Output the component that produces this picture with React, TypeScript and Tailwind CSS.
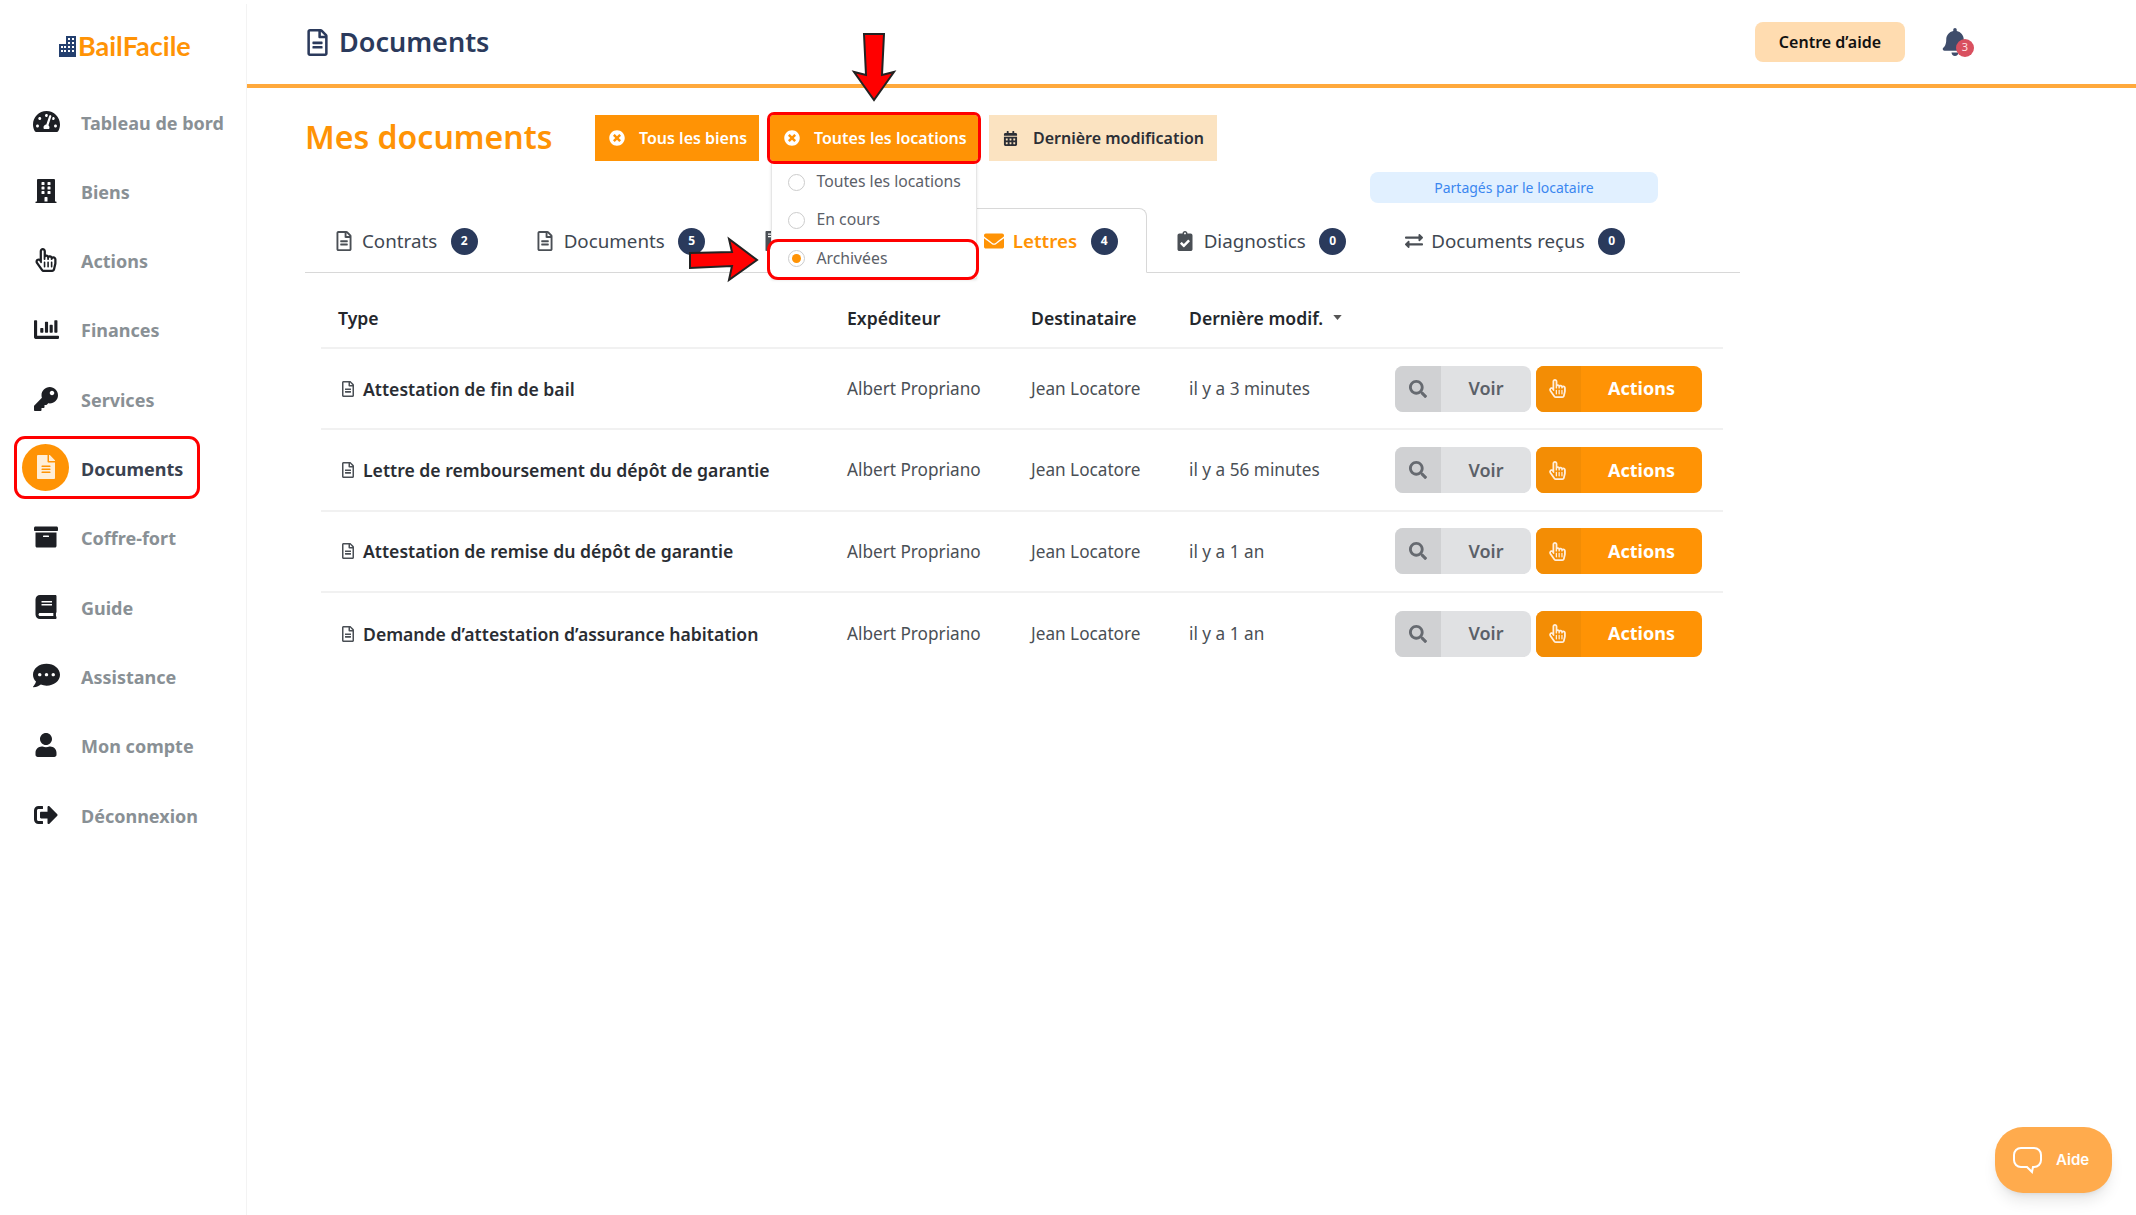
import type { ReactNode } from "react";
import type { IconType } from "react-icons";
import {
  FaArchive,
  FaBell,
  FaBook,
  FaCalendarAlt,
  FaChartBar,
  FaClipboardCheck,
  FaCommentDots,
  FaEnvelope,
  FaExchangeAlt,
  FaFileAlt,
  FaFileInvoiceDollar,
  FaKey,
  FaRegFileAlt,
  FaRegHandPointer,
  FaSearch,
  FaSignOutAlt,
  FaTachometerAlt,
  FaTimesCircle,
  FaBuilding,
  FaUser,
} from "react-icons/fa";

const nav: { label: string; icon: IconType; iconClass: string }[] = [
  { label: "Tableau de bord", icon: FaTachometerAlt, iconClass: "text-[27px]" },
  { label: "Biens", icon: FaBuilding, iconClass: "text-[24px]" },
  { label: "Actions", icon: FaRegHandPointer, iconClass: "text-[24px]" },
  { label: "Finances", icon: FaChartBar, iconClass: "text-[25px]" },
  { label: "Services", icon: FaKey, iconClass: "text-[24px]" },
  { label: "Documents", icon: FaFileAlt, iconClass: "text-[24px]" },
  { label: "Coffre-fort", icon: FaArchive, iconClass: "text-[24px]" },
  { label: "Guide", icon: FaBook, iconClass: "text-[24px]" },
  { label: "Assistance", icon: FaCommentDots, iconClass: "text-[27px]" },
  { label: "Mon compte", icon: FaUser, iconClass: "text-[24px]" },
  { label: "Déconnexion", icon: FaSignOutAlt, iconClass: "text-[24px]" },
];

const rows = [
  ["Attestation de fin de bail", "il y a 3 minutes"],
  ["Lettre de remboursement du dépôt de garantie", "il y a 56 minutes"],
  ["Attestation de remise du dépôt de garantie", "il y a 1 an"],
  ["Demande d’attestation d’assurance habitation", "il y a 1 an"],
];

function Logo() {
  return (
    <div className="flex h-[88.4px] items-center pl-[59px] pt-[5px]">
      <svg viewBox="0 0 17 21" className="mr-[2px] h-[21px] w-[17px]" fill="#24406f">
        <path d="M7 0h10v21H0V8h7z" />
        <g fill="#fff">
          <rect x="9" y="2" width="2" height="2" />
          <rect x="13" y="2" width="2" height="2" />
          <rect x="9" y="6" width="2" height="2" />
          <rect x="13" y="6" width="2" height="2" />
          <rect x="2" y="10" width="2" height="2" />
          <rect x="5" y="10" width="2" height="2" />
          <rect x="9" y="10" width="2" height="2" />
          <rect x="13" y="10" width="2" height="2" />
          <rect x="2" y="14" width="2" height="2" />
          <rect x="5" y="14" width="2" height="2" />
          <rect x="9" y="14" width="2" height="2" />
          <rect x="13" y="14" width="2" height="2" />
        </g>
      </svg>
      <span className="font-['Lato',sans-serif] text-[27px] font-bold text-[#ff9305]">BailFacile</span>
    </div>
  );
}

function Sidebar() {
  return (
    <aside className="mt-1 w-[247px] shrink-0 border-r border-[#f3f3f3]">
      <div className="-mt-1">
        <Logo />
        {nav.map(({ label, icon: Icon, iconClass }) => {
          const active = label === "Documents";
          return (
            <div key={label} className="flex h-[69.3px] items-center">
              {active ? (
                <div className="mb-[5px] ml-[17px] flex h-[57px] w-[180px] items-center rounded-lg outline-[3px] outline-[#f00]">
                  <span className="ml-[5px] flex h-[47px] w-[47px] shrink-0 items-center justify-center rounded-full bg-[#ff9305]">
                    <Icon className="text-[24px] text-[#ffeed8]" />
                  </span>
                  <span className="ml-[12px] mt-[4px] text-[18px] font-bold text-[#3a4250]">{label}</span>
                </div>
              ) : (
                <>
                  <span className="mb-[3px] flex w-[92px] items-center justify-center">
                    <Icon className={`${iconClass} text-[#1d1f24]`} />
                  </span>
                  <span className="-ml-[11px] text-[18px] font-bold text-[#899095]">{label}</span>
                </>
              )}
            </div>
          );
        })}
      </div>
    </aside>
  );
}

function Header() {
  return (
    <header className="flex h-[88px] items-center border-b-4 border-[#ffa93c] pl-[57px]">
      <FaRegFileAlt className="text-[27px] text-[#2b3a5c]" />
      <h1 className="ml-[8px] text-[27px] font-semibold text-[#2b3a5c]">Documents</h1>
      <button className="ml-auto flex h-[40px] w-[150px] items-center justify-center rounded-lg bg-[#ffdcb0] text-[16px] font-semibold text-[#111]">
        Centre d’aide
      </button>
      <div className="relative ml-[36px] mr-[171px] mt-[2px] h-[31px] w-[24px]">
        <FaBell className="text-[28px] text-[#3f4d6b]" />
        <span className="absolute left-[15px] top-[11px] flex h-[18px] w-[18px] items-center justify-center rounded-full bg-[#d9505f] text-[11px] text-[#ffe3e3]">
          3
        </span>
      </div>
    </header>
  );
}

function FilterButton({
  icon,
  label,
  pale,
  children,
  className,
}: {
  icon: ReactNode;
  label: string;
  pale?: boolean;
  children?: ReactNode;
  className?: string;
}) {
  return (
    <div className={`relative flex h-[46px] items-center text-[16px] font-semibold ${pale ? "bg-[#fbe3c1] text-[#2c2f36]" : "bg-[#ff9305] text-white"} ${className ?? ""}`}>
      {icon}
      <span>{label}</span>
      {children}
    </div>
  );
}

function Radio({ label, checked, boxed }: { label: string; checked?: boolean; boxed?: boolean }) {
  return (
    <div
      className={`flex items-center text-[15.75px] text-[#5b6068] ${
        boxed
          ? "-ml-[2px] mt-[3px] h-[35px] rounded-lg bg-white pb-[2px] pl-[17.5px] outline-[3px] outline-[#f00]"
          : "h-[38px] pl-[15.5px]"
      }`}
    >
      <span className="flex h-[17px] w-[17px] items-center justify-center rounded-full border border-[#ccc] bg-white">
        {checked && <span className="h-[9px] w-[9px] rounded-full bg-[#ff9305]" />}
      </span>
      <span className="ml-[12px]">{label}</span>
    </div>
  );
}

function Filters() {
  return (
    <div className="mt-[27px] flex items-center">
      <h2 className="mb-[2px] w-[290px] text-[32px] font-semibold leading-[44px] text-[#ff9305]">Mes documents</h2>
      <FilterButton
        label="Tous les biens"
        className="w-[164px]"
        icon={<FaTimesCircle className="ml-[14px] mr-[14px] text-[16px]" />}
      />
      <FilterButton
        label="Toutes les locations"
        className="z-20 ml-[11px] w-[208px] rounded-sm outline-[3px] outline-[#f00]"
        icon={<FaTimesCircle className="ml-[14px] mr-[14px] text-[16px]" />}
      >
        <div className="absolute left-[1px] top-[48px] -z-10 h-[116px] w-[206px] border border-t-0 border-[#e6e6e6] bg-white font-normal shadow-sm">
          <Radio label="Toutes les locations" />
          <Radio label="En cours" />
          <Radio label="Archivées" checked boxed />
        </div>
      </FilterButton>
      <FilterButton
        pale
        label="Dernière modification"
        className="ml-[11px] w-[228px]"
        icon={<FaCalendarAlt className="ml-[14px] mr-[15px] text-[15px]" />}
      />
    </div>
  );
}

function Tab({
  icon: Icon,
  label,
  count,
  active,
  iconClass,
  className,
}: {
  icon: IconType;
  label: string;
  count: number;
  active?: boolean;
  iconClass?: string;
  className?: string;
}) {
  return (
    <div
      className={`-mb-px flex h-[65px] shrink-0 items-center pt-[1px] text-[18.75px] ${
        active ? "rounded-t-lg border border-b-white border-[#d8d8d8] bg-white pl-[28px] pr-[28px] font-semibold text-[#ff9305]" : "pl-[28.5px] pr-[29px] text-[#3f4852]"
      } ${className ?? ""}`}
    >
      <Icon className={iconClass ?? "text-[20px] text-[#4a4f55]"} />
      <span className="ml-[8.5px]">{label}</span>
      <span className="ml-[13.5px] flex h-[27px] w-[27px] items-center justify-center rounded-full bg-[#2a3a5c] text-[12px] font-bold text-white">
        {count}
      </span>
    </div>
  );
}

function Tabs() {
  return (
    <div className="flex w-[1435px] items-end border-b border-[#d8d8d8]">
      <Tab icon={FaRegFileAlt} label="Contrats" count={2} />
      <Tab icon={FaRegFileAlt} label="Documents" count={5} />
      {/* this tab sits behind the open dropdown, only its icon shows */}
      <div className="-mb-px flex h-[65px] w-[221px] shrink-0 items-center pl-[28.5px] pt-[1px]">
        <FaFileInvoiceDollar className="text-[20px] text-[#4a4f55]" />
      </div>
      <Tab icon={FaEnvelope} label="Lettres" count={4} active iconClass="text-[20px] text-[#ff9305]" />
      <Tab icon={FaClipboardCheck} label="Diagnostics" count={0} />
      <Tab icon={FaExchangeAlt} label="Documents reçus" count={0} iconClass="text-[18px] text-[#4a4f55]" className="ml-[1px]" />
    </div>
  );
}

const gridCols = "grid grid-cols-[509px_184px_158px_206px_1fr] items-center pl-[17px]";

function Table() {
  return (
    <div className="ml-[16px] w-[1402px]">
      <div className={`${gridCols} mt-[18px] h-[58px] border-b-2 border-[#f1f1f1] pb-[2px] text-[17.6px] font-semibold text-[#24272c]`}>
        <span>Type</span>
        <span>Expéditeur</span>
        <span>Destinataire</span>
        <span className="flex items-center">
          Dernière modif.
          <svg viewBox="0 0 10 6" className="ml-[10px] h-[5px] w-[9px]" fill="#555">
            <path d="M0 0h10L5 6z" />
          </svg>
        </span>
      </div>
      {rows.map(([title, age], i) => (
        <div key={title} className={`${gridCols} h-[81.4px] ${i < 3 ? "border-b-2 border-[#f1f1f1]" : ""} text-[17.2px] text-[#4a4f55]`}>
          <span className="flex items-center text-[17.6px] font-semibold text-[#2a2d33]">
            <FaRegFileAlt className="ml-[2px] mr-[7px] text-[16px] text-[#4a4f55]" />
            {title}
          </span>
          <span>Albert Propriano</span>
          <span>Jean Locatore</span>
          <span>{age}</span>
          <div className="flex">
            <button className="flex h-[46px] w-[136px] items-center overflow-hidden rounded-lg bg-[#e0e1e3] text-[18px] font-semibold text-[#5b6068]">
              <span className="flex h-full w-[46px] items-center justify-center bg-[#d0d1d3]">
                <FaSearch className="text-[18px] text-[#666a70]" />
              </span>
              <span className="flex-1 text-center">Voir</span>
            </button>
            <button className="ml-[5px] flex h-[46px] w-[166px] items-center overflow-hidden rounded-lg bg-[#ff9305] text-[18px] font-bold text-white">
              <span className="flex h-full w-[45px] items-center justify-center bg-[#f38d05] pr-[2px]">
                <FaRegHandPointer className="text-[19px] text-[#ffeedd]" />
              </span>
              <span className="flex-1 text-center">Actions</span>
            </button>
          </div>
        </div>
      ))}
    </div>
  );
}

export default function App() {
  return (
    <div className="relative flex h-screen overflow-hidden bg-white font-['Noto_Sans',sans-serif]">
      <Sidebar />
      <main className="min-w-0 flex-1">
        <Header />
        <div className="pl-[58px]">
          <Filters />
          <div className="ml-[1065px] mt-[11px] flex h-[31px] w-[288px] items-center justify-center rounded-lg bg-[#e1f0ff] text-[14px] text-[#3b87f0]">
            Partagés par le locataire
          </div>
          <div className="mt-[5px]">
            <Tabs />
          </div>
          <Table />
        </div>
      </main>

      {/* annotation arrows drawn on top of the capture */}
      <svg viewBox="0 0 50 75" className="absolute left-[849px] top-[30px] z-30 h-[75px] w-[50px]">
        <path d="M15 4h20l-2 41 12-3-20 28-20-28 12 3z" fill="#f00" stroke="#222" strokeWidth="2" />
      </svg>
      <svg viewBox="0 0 78 50" className="absolute left-[685px] top-[235px] z-30 h-[50px] w-[78px]">
        <path d="M5 18l42-1-3-13 28 21-28 20 3-14-42 2z" fill="#f00" stroke="#222" strokeWidth="2" />
      </svg>

      <button className="absolute left-[1995px] top-[1127px] flex h-[66px] w-[117px] items-center rounded-[28px] bg-[#ffab4d] pl-[18px] font-['Inter',sans-serif] text-[15px] font-semibold text-white shadow-lg">
        <svg viewBox="0 0 30 28" className="h-[28px] w-[30px]" fill="none" stroke="#fff" strokeWidth="2">
          <path d="M8 2h13c4 0 7 3 7 7v5c0 4-3 7-7 7h-1l-1 5-5-5H8c-4 0-7-3-7-7V9c0-4 3-7 7-7z" />
        </svg>
        <span className="ml-[13px]">Aide</span>
      </button>
    </div>
  );
}
